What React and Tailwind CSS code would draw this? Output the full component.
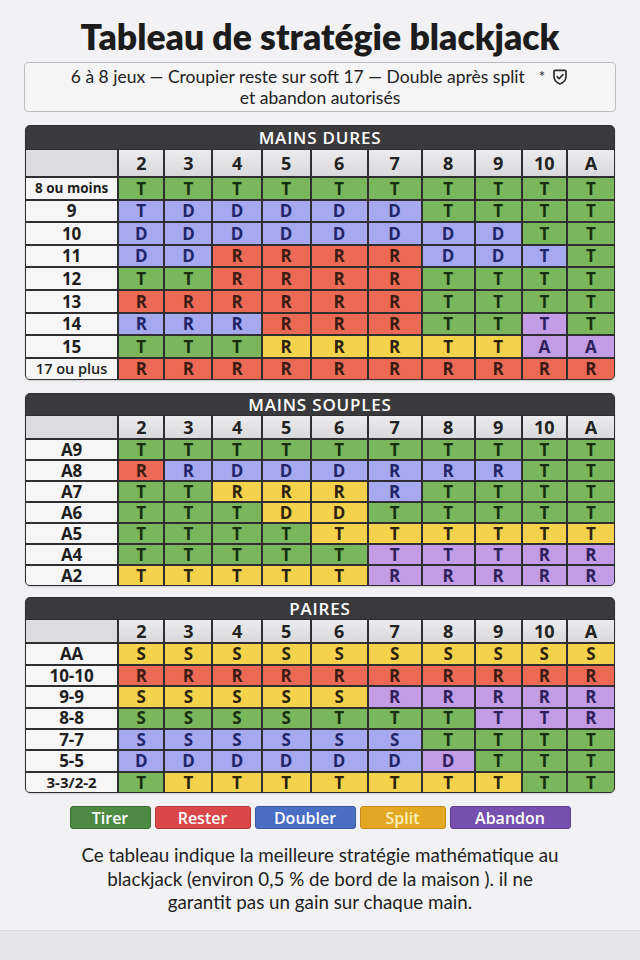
import React from "react";

const STYLES = {
  G: "bg-[#7ab65c] text-[#16300f]",
  B: "bg-[#a6a9ef] text-[#1f2568]",
  R: "bg-[#ec6a55] text-[#3a1c12]",
  Y: "bg-[#f5d24c] text-[#2b2310]",
  P: "bg-[#c29ce4] text-[#2e1f5c]",
};

const COLS = ["2", "3", "4", "5", "6", "7", "8", "9", "10", "A"];

const HARD = [
  ["8 ou moins", "TG TG TG TG TG TG TG TG TG TG"],
  ["9", "TB DB DB DB DB DB TG TG TG TG"],
  ["10", "DB DB DB DB DB DB DB DB TG TG"],
  ["11", "DB DB RR RR RR RR DB DB TB TG"],
  ["12", "TG TG RR RR RR RR TG TG TG TG"],
  ["13", "RR RR RR RR RR RR TG TG TG TG"],
  ["14", "RB RB RB RR RR RR TG TG TP TG"],
  ["15", "TG TG TG RY RY RY TY TY AP AP"],
  ["17 ou plus", "RR RR RR RR RR RR RR RR RR RR"],
];

const SOFT = [
  ["A9", "TG TG TG TG TG TG TG TG TG TG"],
  ["A8", "RR RB DB DB DB RB RB RB TG TG"],
  ["A7", "TG TG RY RY RY RB TG TG TG TG"],
  ["A6", "TG TG TG DY DY TG TG TG TG TG"],
  ["A5", "TG TG TG TG TY TY TY TY TY TY"],
  ["A4", "TG TG TG TG TG TP TP TP RP RP"],
  ["A2", "TY TY TY TY TY RP RP RP RP RP"],
];

const PAIRS = [
  ["AA", "SY SY SY SY SY SY SY SY SY SY"],
  ["10-10", "RR RR RR RR RR RR RR RR RR RR"],
  ["9-9", "SY SY SY SY SY RP RP RP RP RP"],
  ["8-8", "SG SG SG SG TG TG TG TP TP RP"],
  ["7-7", "SB SB SB SB SB SB TG TG TG TG"],
  ["5-5", "DB DB DB DB DB DB DP TG TG TG"],
  ["3-3/2-2", "TG TY TY TY TY TY TY TY TG TG"],
];

function labelClass(label) {
  if (label === "8 ou moins") return "text-[13.5px] font-bold";
  if (label === "17 ou plus") return "text-[14.5px] font-semibold";
  if (label === "3-3/2-2") return "text-[15px] font-bold";
  return "text-[17px] font-bold";
}

function Table({ title, rows, headH, colH, rowH }) {
  return (
    <div className="mx-[25px] overflow-hidden rounded-[5px] border border-[#2f2f31] bg-[#2f2f31] shadow-[0_1px_2px_rgba(0,0,0,0.15)]">
      <div
        className={`flex items-center justify-center bg-[#3a3a3d] text-[17px] font-semibold tracking-[0.8px] text-white ${headH}`}
        style={{ fontFamily: '"Open Sans", sans-serif' }}
      >
        {title}
      </div>
      <div
        className="grid grid-cols-[93fr_45fr_47fr_48fr_48fr_56fr_53fr_52fr_46fr_44fr_47fr] gap-[2px] border-t border-[#2f2f31]"
        style={{ fontFamily: '"Open Sans", sans-serif' }}
      >
        <div className={`bg-[#dcdcde] ${colH}`} />
        {COLS.map((c) => (
          <div
            key={c}
            className={`flex items-center justify-center bg-gradient-to-b from-[#ececee] to-[#d9d9db] text-[18px] font-bold text-[#222] ${colH}`}
          >
            {c}
          </div>
        ))}
        {rows.map(([label, cells]) => (
          <React.Fragment key={label}>
            <div
              className={`flex items-center justify-center bg-[#f6f6f6] text-[#1e1e1e] ${rowH} ${labelClass(label)}`}
            >
              {label}
            </div>
            {cells.split(" ").map((cell, i) => (
              <div
                key={i}
                className={`flex items-center justify-center text-[17px] font-bold ${rowH} ${STYLES[cell[1]]}`}
              >
                {cell[0]}
              </div>
            ))}
          </React.Fragment>
        ))}
      </div>
    </div>
  );
}

function ShieldCheck() {
  return (
    <svg width="18" height="18" viewBox="0 0 24 24" fill="none" stroke="#2a2a2a" strokeWidth="2.2" strokeLinecap="round" strokeLinejoin="round">
      <path d="M4 4.5c0-.8.6-1.3 1.4-1.3h13.2c.8 0 1.4.5 1.4 1.3v6.7c0 5-3.6 8.3-8 10-4.4-1.7-8-5-8-10z" />
      <path d="M8.3 11.6l2.6 2.7 5-5.4" />
    </svg>
  );
}

const LEGEND = [
  ["Tirer", "bg-[#4f8a45] border-[#3d6d35] w-[81px] text-white"],
  ["Rester", "bg-[#d9474a] border-[#b3383a] w-[96px] text-white"],
  ["Doubler", "bg-[#4a6ec4] border-[#3a57a0] w-[101px] text-white"],
  ["Split", "bg-[#e3a823] border-[#c38d17] w-[86px] text-[#fbeebc]"],
  ["Abandon", "bg-[#7650ae] border-[#5f3f90] w-[121px] text-white"],
];

export default function App() {
  return (
    <div
      className="flex h-[960px] w-[640px] flex-col bg-[#f2f2f4]"
      style={{ fontFamily: 'Lato, "Open Sans", sans-serif' }}
    >
      <h1 className="mt-[18px] text-center text-[35.5px] font-extrabold leading-[38px] text-[#1c1c1c]">
        Tableau de stratégie blackjack
      </h1>
      <div className="mx-[24px] mt-[6px] flex h-[50px] flex-col items-center justify-center rounded-[4px] border border-[#bdbdc0] bg-[#f5f5f6] text-[17.5px] leading-[21px] text-[#222]">
        <div className="flex items-center">
          <span>6 à 8 jeux — Croupier reste sur soft 17 — Double après split</span>
          <span className="ml-[14px] mr-[6px] text-[15px]">*</span>
          <ShieldCheck />
        </div>
        <div>et abandon autorisés</div>
      </div>

      <div className="mt-[13px]">
        <Table title="MAINS DURES" rows={HARD} headH="h-[23px]" colH="h-[26px]" rowH="h-[20.6px]" />
      </div>
      <div className="mt-[13px]">
        <Table title="MAINS SOUPLES" rows={SOFT} headH="h-[21px]" colH="h-[22px]" rowH="h-[19px]" />
      </div>
      <div className="mt-[11px]">
        <Table title="PAIRES" rows={PAIRS} headH="h-[21px]" colH="h-[22px]" rowH="h-[19.4px]" />
      </div>

      <div className="mt-[13px] flex justify-center gap-[4px]" style={{ fontFamily: '"Open Sans", sans-serif' }}>
        {LEGEND.map(([t, cls]) => (
          <div
            key={t}
            className={`flex h-[23px] items-center justify-center rounded-[3px] border text-[16px] font-semibold ${cls}`}
          >
            {t}
          </div>
        ))}
      </div>

      <p className="mt-[14px] px-[30px] text-center text-[18.8px] leading-[23.5px] text-[#222]">
        Ce tableau indique la meilleure stratégie mathématique au
        <br />
        blackjack (environ 0,5 % de bord de la maison ). il ne
        <br />
        garantit pas un gain sur chaque main.
      </p>

      <div className="mt-auto h-[30px] border-t border-[#dadade] bg-[#e6e6eb]" />
    </div>
  );
}
